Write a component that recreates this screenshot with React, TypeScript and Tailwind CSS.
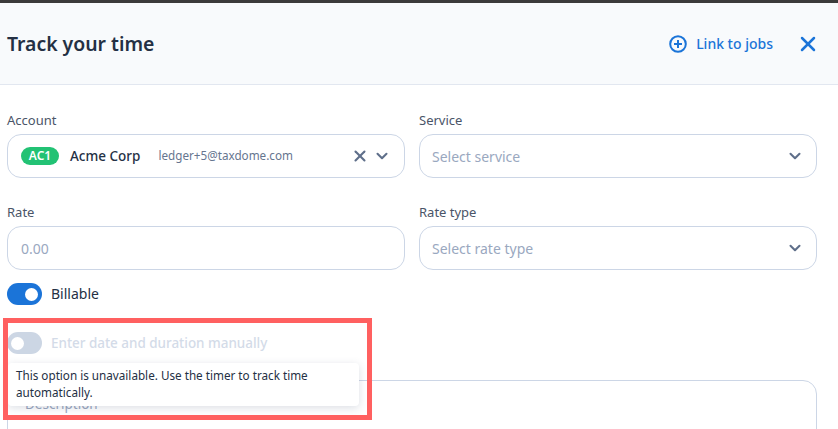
import { ChevronDown, X } from "lucide-react";

const font = "font-['Noto_Sans','Open_Sans',sans-serif]";

const Label = ({ children }: { children: string }) => (
  <div className="mb-[5px] h-[16px] text-[13px] leading-[14px] text-[#4a5568]">{children}</div>
);

const Chevron = () => (
  <ChevronDown className="h-[18px] w-[18px] text-[#5f6f8a]" strokeWidth={2.75} />
);

const SelectBox = ({ placeholder }: { placeholder: string }) => (
  <div className="flex h-[44px] items-center justify-between rounded-[14px] border border-[#ccd6e6] pl-[12px] pr-[12px]">
    <span className="text-[14px] text-[#9aa8bf]">{placeholder}</span>
    <Chevron />
  </div>
);

const Toggle = ({ on, disabled }: { on?: boolean; disabled?: boolean }) => (
  <div
    className={`flex h-[22px] w-[35px] items-center rounded-full px-[4px] ${
      on ? "justify-end bg-[#1b74d8]" : "justify-start"
    } ${disabled ? "bg-[#ccd6e4]" : ""}`}
  >
    <div className="h-[13px] w-[13px] rounded-full bg-white" />
  </div>
);

export default function App() {
  return (
    <div className={`relative h-[429px] w-[838px] overflow-hidden bg-white ${font}`}>
      <div className="h-[3px] bg-[#3b3b3b]" />
      <header className="flex h-[82px] items-center justify-between border-b border-[#e2e7f0] bg-[#f8fafc] pl-[7px] pr-[18px]">
        <h1 className="text-[19.4px] font-semibold text-[#243044]">Track your time</h1>
        <div className="flex items-center">
          <svg viewBox="0 0 18 18" className="h-[18px] w-[18px] text-[#1b74d8]" fill="none" stroke="currentColor" strokeWidth="2">
            <circle cx="9" cy="9" r="7.8" />
            <path d="M9 5v8M5 9h8" />
          </svg>
          <span className="ml-[9px] text-[14px] font-medium text-[#1b74d8]">Link to jobs</span>
          <X className="ml-[23px] h-[24px] w-[24px] text-[#1b74d8]" strokeWidth={2.5} />
        </div>
      </header>

      <div className="px-[7px] pt-[28px] pr-[21px]">
        <div className="grid grid-cols-2 gap-x-[14px] gap-y-[27px]">
          <div>
            <Label>Account</Label>
            <div className="flex h-[44px] items-center rounded-[14px] border border-[#ccd6e6] pl-[13px] pr-[13px]">
              <span className="flex h-[18px] w-[38px] items-center justify-center rounded-full bg-[#22c274] text-[12px] font-semibold text-white">AC1</span>
              <span className="ml-[11px] text-[13.5px] font-medium text-[#243044]">Acme Corp</span>
              <span className="ml-[18px] text-[11.7px] text-[#66758f]">ledger+5@taxdome.com</span>
              <X className="ml-auto h-[18px] w-[18px] text-[#5f6f8a]" strokeWidth={2.75} />
              <ChevronDown className="ml-[4px] h-[18px] w-[18px] text-[#5f6f8a]" strokeWidth={2.75} />
            </div>
          </div>
          <div>
            <Label>Service</Label>
            <SelectBox placeholder="Select service" />
          </div>
          <div>
            <Label>Rate</Label>
            <div className="flex h-[44px] items-center rounded-[14px] border border-[#ccd6e6] pl-[13px] text-[14px] text-[#9aa8bf]">0.00</div>
          </div>
          <div>
            <Label>Rate type</Label>
            <SelectBox placeholder="Select rate type" />
          </div>
        </div>

        <div className="mt-[13px] flex h-[22px] items-center gap-[9px]">
          <Toggle on />
          <span className="text-[14px] leading-[20px] text-[#243044]">Billable</span>
        </div>
        <div className="mt-[27px] flex h-[22px] items-center gap-[9px]">
          <Toggle disabled />
          <span className="text-[13.45px] font-medium leading-[20px] text-[#d3dbe8]">Enter date and duration manually</span>
        </div>

        <div className="mt-[26px] h-[80px] rounded-[14px] border border-[#ccd6e6] px-[17px] pt-[13px] text-[13.5px] text-[#9aa8bf]">Description</div>
      </div>

      {/* tooltip over the description box */}
      <div className="absolute left-[8px] top-[363px] h-[43px] w-[351px] rounded-[4px] bg-white pl-[8px] pt-[4px] text-[11.7px] leading-[17px] text-[#243044] shadow-[0_2px_8px_rgba(60,80,110,0.18)]">
        This option is unavailable. Use the timer to track time automatically.
      </div>

      {/* annotation frame */}
      <div className="pointer-events-none absolute left-[3px] top-[318px] h-[102px] w-[369px] border-[5px] border-[#ff6060]" />
    </div>
  );
}
